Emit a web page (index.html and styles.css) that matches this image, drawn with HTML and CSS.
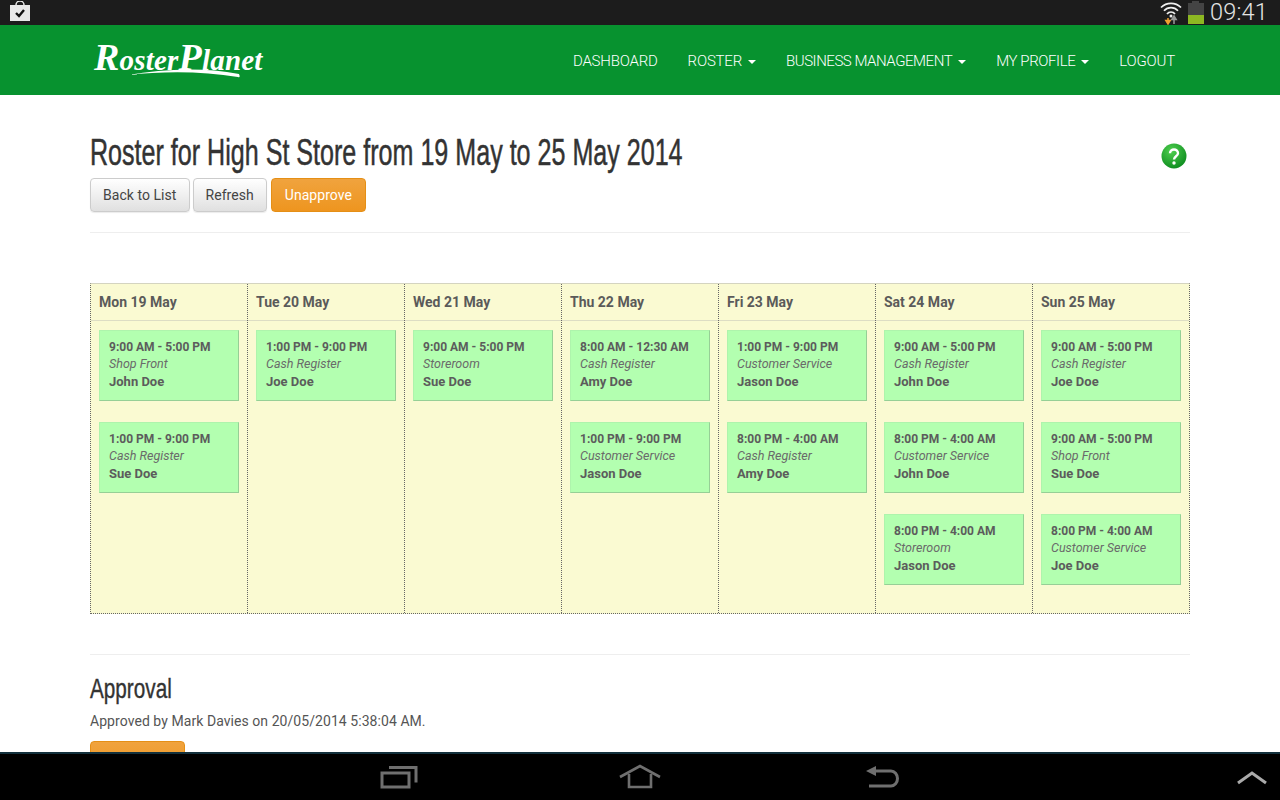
FILE: index.html
```html
<!DOCTYPE html>
<html lang="en">
<head>
<meta charset="utf-8">
<title>Roster Planet</title>
<link rel="stylesheet" href="styles.css">
</head>
<body>
<div class="app">
  <div class="status">
    <svg class="bag" width="20" height="21" viewBox="0 0 20 21"><path d="M6 7V4a4 4 0 0 1 8 0v3" fill="none" stroke="#e8e8e8" stroke-width="1.5"/><rect x="0" y="4" width="20" height="16" fill="#e8e8e8"/><path d="M6 12l3 3 5-6" fill="none" stroke="#111" stroke-width="2.4"/></svg>
    <div class="status-right">
      <svg class="wifi" width="22" height="24" viewBox="0 0 22 24"><g fill="none" stroke="#eee" stroke-width="1.7"><path d="M1 6.500a14 14 0 0 1 20 0"/><path d="M4 9.800a9.500 9.500 0 0 1 14 0"/><path d="M7 13a5 5 0 0 1 8 0"/></g><circle cx="11" cy="15" r="1.500" fill="#eee"/><path d="M8 17v3M5.800 19.500h4.400L8 23z" stroke="#f0a030" stroke-width="1.500" fill="#f0a030"/><path d="M14 18.500v4.500M11.800 18.500h4.400L14 15z" stroke="#999" stroke-width="1.500" fill="#999"/></svg>
      <div class="battery"><div class="battery-cap"></div><div class="battery-empty"></div><div class="battery-fill"></div></div>
      <span class="clock">09:41</span>
    </div>
  </div>
  <nav class="nav">
    <div class="logo">
      <span class="logo-text"><span class="logo-cap">R</span>oster<span class="logo-cap">P</span>lanet</span>
      <svg class="swoosh" width="112" height="10" viewBox="0 0 112 10"><path d="M0 7C35 1 75-1 111 6c1 2 1 4-1 3C75 3 35 3 0 7z" fill="#fff"/></svg>
    </div>
    <ul class="menu">
      <li>DASHBOARD</li>
      <li>ROSTER<span class="caret"></span></li>
      <li class="tight">BUSINESS MANAGEMENT<span class="caret"></span></li>
      <li class="tighter">MY PROFILE<span class="caret"></span></li>
      <li>LOGOUT</li>
    </ul>
  </nav>
  <main class="main">
    <div class="head">
      <div>
        <h1>Roster for High St Store from 19 May to 25 May 2014</h1>
        <div class="buttons">
          <a class="btn">Back to List</a>
          <a class="btn">Refresh</a>
          <a class="btn btn-orange">Unapprove</a>
        </div>
      </div>
      <svg class="help" width="26" height="26" viewBox="0 0 26 26"><defs><radialGradient id="hg" cx="40%" cy="30%" r="75%"><stop offset="0" stop-color="#4fd04f"/><stop offset="1" stop-color="#0c8a1e"/></radialGradient></defs><circle cx="13" cy="13" r="12.500" fill="url(#hg)"/><path d="M9 10.200c0-5 8-5 8 0 0 3-4 3-4 6.200" fill="none" stroke="#fff" stroke-width="2.400"/><circle cx="13" cy="20" r="1.700" fill="#fff"/></svg>
    </div>
    <hr class="rule rule-top">
    <div class="week">
      <section class="day"><h4>Mon 19 May</h4>
        <div class="shift"><b>9:00 AM - 5:00 PM</b><i>Shop Front</i><strong>John Doe</strong></div>
        <div class="shift"><b>1:00 PM - 9:00 PM</b><i>Cash Register</i><strong>Sue Doe</strong></div>
      </section>
      <section class="day"><h4>Tue 20 May</h4>
        <div class="shift"><b>1:00 PM - 9:00 PM</b><i>Cash Register</i><strong>Joe Doe</strong></div>
      </section>
      <section class="day"><h4>Wed 21 May</h4>
        <div class="shift"><b>9:00 AM - 5:00 PM</b><i>Storeroom</i><strong>Sue Doe</strong></div>
      </section>
      <section class="day"><h4>Thu 22 May</h4>
        <div class="shift"><b>8:00 AM - 12:30 AM</b><i>Cash Register</i><strong>Amy Doe</strong></div>
        <div class="shift"><b>1:00 PM - 9:00 PM</b><i>Customer Service</i><strong>Jason Doe</strong></div>
      </section>
      <section class="day"><h4>Fri 23 May</h4>
        <div class="shift"><b>1:00 PM - 9:00 PM</b><i>Customer Service</i><strong>Jason Doe</strong></div>
        <div class="shift"><b>8:00 PM - 4:00 AM</b><i>Cash Register</i><strong>Amy Doe</strong></div>
      </section>
      <section class="day"><h4>Sat 24 May</h4>
        <div class="shift"><b>9:00 AM - 5:00 PM</b><i>Cash Register</i><strong>John Doe</strong></div>
        <div class="shift"><b>8:00 PM - 4:00 AM</b><i>Customer Service</i><strong>John Doe</strong></div>
        <div class="shift"><b>8:00 PM - 4:00 AM</b><i>Storeroom</i><strong>Jason Doe</strong></div>
      </section>
      <section class="day"><h4>Sun 25 May</h4>
        <div class="shift"><b>9:00 AM - 5:00 PM</b><i>Cash Register</i><strong>Joe Doe</strong></div>
        <div class="shift"><b>9:00 AM - 5:00 PM</b><i>Shop Front</i><strong>Sue Doe</strong></div>
        <div class="shift"><b>8:00 PM - 4:00 AM</b><i>Customer Service</i><strong>Joe Doe</strong></div>
      </section>
    </div>
    <hr class="rule rule-bottom">
    <h2>Approval</h2>
    <p class="approved">Approved by Mark Davies on 20/05/2014 5:38:04 AM.</p>
    <a class="btn btn-orange btn-wide">Unapprove</a>
  </main>
  <div class="softkeys">
    <svg class="key-recent" width="38" height="26" viewBox="0 0 38 26"><g fill="none" stroke="#6f6f6f" stroke-width="3"><rect x="2" y="9" width="27" height="14"/><path d="M9 3.500h27v15"/></g></svg>
    <svg class="key-home" width="42" height="26" viewBox="0 0 42 26"><g fill="none" stroke="#6f6f6f" stroke-width="2.600"><path d="M1 13L21 2l20 11"/><path d="M10 10v13h22V10"/></g></svg>
    <svg width="34" height="26" viewBox="0 0 34 26"><path d="M1 7l10-5v10z" fill="#6f6f6f"/><path d="M9 7h17a6.500 7.500 0 0 1 0 15H4" fill="none" stroke="#6f6f6f" stroke-width="3"/></svg>
    <svg class="chevron" width="32" height="16" viewBox="0 0 32 16"><path d="M2 13L16 3l14 10" fill="none" stroke="#aaa" stroke-width="3"/></svg>
  </div>
</div>
</body>
</html>
```
FILE: styles.css
```css
* { box-sizing: border-box; }
html, body { margin: 0; padding: 0; height: 100%; }
body { font-family: Roboto, "Liberation Sans", sans-serif; color: #555; background: #fff; overflow: hidden; }
.app { width: 1280px; height: 800px; display: flex; flex-direction: column; overflow: hidden; }

.status { flex: 0 0 25px; background: #1c1c1c; display: flex; justify-content: space-between; align-items: center; padding: 0 12px 0 10px; }
.bag { margin-top: -3px; }
.status-right { display: flex; align-items: center; gap: 6px; height: 25px; }
.wifi { margin-right: -1px; }
.battery { width: 16px; height: 23px; display: flex; flex-direction: column; align-items: center; margin-left: 1px; }
.battery-cap { width: 7px; height: 2px; background: #444; }
.battery-empty { width: 16px; flex: 1; background: #444; }
.battery-fill { width: 16px; height: 9px; background: #8db822; }
.clock { color: #e4e4e4; font-size: 23.500px; font-weight: 300; line-height: 25px; letter-spacing: 0.2px; }

.nav { flex: 0 0 70px; background: #07922f; display: flex; justify-content: space-between; align-items: center; padding: 0 90px 0 94px; color: #fff; }
.logo { position: relative; width: 170px; height: 40px; margin-top: -2px; }
.logo-text { font-family: "Liberation Serif", serif; font-style: italic; font-weight: 700; font-size: 29px; letter-spacing: 0.2px; color: #fff; line-height: 36px; white-space: nowrap; }
.logo-cap { font-size: 38px; }
.swoosh { position: absolute; left: 34px; top: 29px; }
.menu { list-style: none; display: flex; gap: 30px; margin: 2px 0 0; padding: 0 15px 0 0; font-size: 15px; font-weight: 300; letter-spacing: -0.2px; line-height: 20px; }
.menu li { white-space: nowrap; }
.menu .tight { letter-spacing: -0.46px; }
.menu .tighter { letter-spacing: -0.4px; }
.caret { display: inline-block; width: 0; height: 0; margin-left: 6px; vertical-align: middle; border-top: 4px solid #fff; border-left: 4px solid transparent; border-right: 4px solid transparent; }

.main { flex: 1; min-height: 0; overflow: hidden; padding: 34px 90px 0; }
.head { display: flex; justify-content: space-between; align-items: flex-start; }
h1 { margin: 0 0 2px; font-family: "Liberation Sans", sans-serif; font-weight: 400; font-size: 37px; line-height: 47px; color: #333; white-space: nowrap; transform: scaleX(.678); transform-origin: left center; -webkit-text-stroke: 0.5px #333; }
.help { margin: 14px 3px 0 0; }
.buttons { display: flex; gap: 3px; }
.btn { display: block; height: 34px; padding: 0 12px; border: 1px solid #ccc; border-radius: 4px; background: linear-gradient(#fff, #e0e0e0); color: #444; font-size: 14px; letter-spacing: 0.05px; line-height: 32px; box-shadow: 0 1px 1px rgba(0,0,0,.08); white-space: nowrap; }
.btn-orange { margin-left: 1px; padding: 0 13px; background: linear-gradient(#f0a33e, #ee951f); border-color: #e58f16; color: #fff; box-shadow: none; }
.btn-wide { width: 95px; margin-left: 0; padding: 0; text-align: center; }
.rule { border: 0; border-top: 1px solid #eee; margin: 0; }
.rule-top { margin: 20px 0 50px; }
.rule-bottom { margin: 40px 0 18px; }

.week { display: grid; grid-template-columns: repeat(6, 157px) 156px; height: 331px; background: #fafad2; border-top: 1px solid #d4d4c0; border-left: 1px dotted #666; border-right: 1px dotted #666; border-bottom: 1px dotted #666; }
.day { border-right: 1px dotted #666; min-width: 0; }
.day:last-child { border-right: 0; }
.day h4 { margin: 0 0 9px; height: 37px; padding: 0 8px; font-size: 14px; font-weight: 700; line-height: 36px; color: #5a5a5a; border-bottom: 1px solid #ddddc4; }
.shift { display: flex; flex-direction: column; width: 140px; height: 71px; margin: 0 0 21px 8px; padding: 8px 9px 0; background: #b3ffb0; border: 1px solid #aef4ac; border-right-color: #96cf96; border-bottom-color: #96cf96; font-size: 12.500px; line-height: 17.500px; color: #5c5c5c; }
.shift b { font-size: 12px; line-height: 16px; font-weight: 700; white-space: nowrap; }
.shift i { font-style: italic; color: #6a6a6a; white-space: nowrap; }
.shift strong { font-size: 13px; font-weight: 700; white-space: nowrap; }

h2 { margin: 0 0 6px; font-family: "Liberation Sans", sans-serif; font-weight: 400; font-size: 28px; line-height: 32px; color: #333; transform: scaleX(.74); transform-origin: left center; -webkit-text-stroke: 0.4px #333; }
.approved { margin: 0 0 10px; font-size: 14px; letter-spacing: 0.06px; line-height: 20px; color: #555; }

.softkeys { flex: 0 0 48px; position: relative; background: #000; border-top: 2px solid #12303c; display: flex; align-items: center; padding-left: 380px; }
.key-recent { margin-right: 201px; }
.key-home { margin-right: 204px; }
.chevron { position: absolute; right: 12px; top: 16px; }
```
